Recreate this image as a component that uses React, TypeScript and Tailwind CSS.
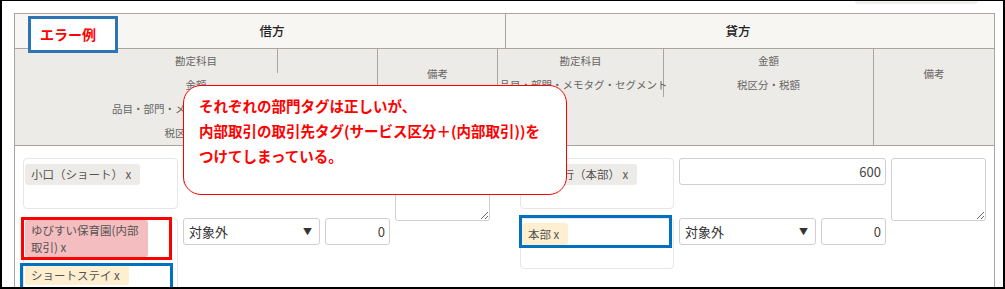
import React from 'react';

const line = 'border-[#a9a59e]';

function Tag({ text, tone, className = '' }: { text: string; tone: 'gray' | 'pink' | 'peach'; className?: string }) {
  const bg = tone === 'gray' ? 'bg-[#edebe7]' : tone === 'pink' ? 'bg-[#f4bdbf]' : 'bg-[#fdefd0]';
  return (
    <div className={`rounded-[3px] pl-[6px] pr-[9px] text-[11.5px] leading-[21px] text-[#555] ${bg} ${className}`}>
      {text}
    </div>
  );
}

function Select() {
  return (
    <div className="flex h-[27px] w-[137px] items-center justify-between rounded-[3px] border border-[#cfcfcf] bg-white pl-[5px] pr-[7px] text-[13px] text-[#333]">
      <span>対象外</span>
      <span className="text-[9px] text-[#333]">▼</span>
    </div>
  );
}

function NumberBox({ value, width }: { value: string; width: string }) {
  return (
    <div className={`flex h-[27px] items-center justify-end rounded-[3px] border border-[#cfcfcf] bg-white pr-[4px] text-[13px] text-[#444] ${width}`}>
      {value}
    </div>
  );
}

function Memo() {
  return (
    <textarea
      readOnly
      className="block h-[63px] w-[95px] rounded-[3px] border border-[#cfcfcf] bg-white outline-none"
    />
  );
}

export default function App() {
  return (
    <div className="relative h-[289px] w-[1005px] overflow-hidden border-x-2 border-b-2 border-t border-black bg-white font-['Noto_Sans_CJK_JP','Liberation_Sans',sans-serif]">
      {/* 上の切れたボタン */}
      <div className="ml-[853px] h-[3px] w-[123px] rounded-b-md bg-[#efeeea]" />

      <div className={`ml-[12px] mt-[9px] w-[981px] border-x border-t ${line}`}>
        {/* 借方・貸方 */}
        <div className={`flex h-[35px] border-b ${line} bg-[#f7f6f3] text-[12.5px] font-medium text-[#222]`}>
          <div className={`flex w-[491px] items-center justify-center border-r ${line} pl-[24px]`}>借方</div>
          <div className="flex flex-1 items-center justify-center pr-[24px]">貸方</div>
        </div>

        {/* 項目見出し */}
        <div className={`flex h-[97px] border-b ${line} bg-[#edebe7] text-center text-[10.5px] leading-[24px] text-[#666]`}>
          <div className={`relative w-[363px] border-r ${line}`}>
            <div>勘定科目</div>
            <div>金額</div>
            <div className="whitespace-nowrap">品目・部門・メモタグ・セグメント</div>
            <div>税区分・税額</div>
            <div className="absolute left-[262px] top-0 h-[24px] w-px bg-[#a9a59e]" />
          </div>
          <div className={`w-[120px] border-r ${line} pt-[13px]`}>備考</div>
          <div className={`flex w-[376px] items-start border-r ${line}`}>
            <div className={`h-[48px] w-[166px] border-r ${line}`}>
              <div>勘定科目</div>
              <div className="-mr-[6px] whitespace-nowrap">品目・部門・メモタグ・セグメント</div>
            </div>
            <div className="flex-1">
              <div>金額</div>
              <div>税区分・税額</div>
            </div>
          </div>
          <div className="flex-1 pt-[13px]">備考</div>
        </div>

        {/* 入力行 */}
        <div className="flex h-[150px] pl-[8px] pt-[12px]">
          {/* 借方 */}
          <div className="flex gap-[5px]">
            <div className="w-[155px]">
              <div className="h-[51px] rounded-[4px] border border-[#e6e6e6] p-px">
                <Tag text="小口（ショート） x" tone="gray" className="inline-block" />
              </div>
              <div className="relative mt-[9px] h-[80px] rounded-[4px] border border-[#e6e6e6] p-px">
                <Tag text="ゆびすい保育園(内部取引) x" tone="pink" className="w-[123px] py-[1.5px] !leading-[17px]" />
                <Tag text="ショートステイ x" tone="peach" className="mt-[8px] inline-block !leading-[20px]" />
                <div className="pointer-events-none absolute -left-[3px] -top-[2px] h-[43px] w-[151px] border-[3px] border-[#ff0000]" />
                <div className="pointer-events-none absolute -left-[4px] top-[44px] h-[40px] w-[153px] border-[3px] border-[#0070c0]" />
              </div>
            </div>
            <div className="w-[207px]">
              <NumberBox value="600" width="w-[207px]" />
              <div className="mt-[33px] flex gap-[5px]">
                <Select />
                <NumberBox value="0" width="w-[65px]" />
              </div>
            </div>
            <Memo />
          </div>

          {/* 貸方 */}
          <div className="ml-[30px] flex gap-[5px]">
            <div className="w-[154px]">
              <div className="h-[51px] rounded-[4px] border border-[#e6e6e6] p-px">
                <Tag text="内部銀行（本部） x" tone="gray" className="inline-block" />
              </div>
              <div className="relative mt-[9px] h-[51px] rounded-[4px] border border-[#e6e6e6] p-px">
                <Tag text="本部 x" tone="peach" className="inline-block !leading-[22px]" />
                <div className="pointer-events-none absolute -left-[2px] -top-[4px] h-[33px] w-[153px] border-[3px] border-[#0070c0]" />
              </div>
            </div>
            <div className="w-[207px]">
              <NumberBox value="600" width="w-[207px]" />
              <div className="mt-[33px] flex gap-[5px]">
                <Select />
                <NumberBox value="0" width="w-[65px]" />
              </div>
            </div>
            <Memo />
          </div>
        </div>
      </div>

      {/* エラー例 ラベル */}
      <div className="absolute left-[26px] top-[15px] z-10 flex h-[37px] w-[90px] items-center border-[3px] border-[#2e75b6] bg-white pl-[9px] text-[14px] font-bold text-[#ff0000]">
        エラー例
      </div>

      {/* 吹き出し */}
      <div className="absolute left-[181px] top-[84px] z-20 h-[110px] w-[384px] rounded-[18px] border border-[#ff0000] bg-white pl-[15px] pt-[7px] text-[14.5px] font-bold leading-[25px] text-[#ff0000]">
        <div>それぞれの部門タグは正しいが、</div>
        <div>内部取引の取引先タグ(サービス区分＋(内部取引))を</div>
        <div>つけてしまっている。</div>
      </div>
    </div>
  );
}
